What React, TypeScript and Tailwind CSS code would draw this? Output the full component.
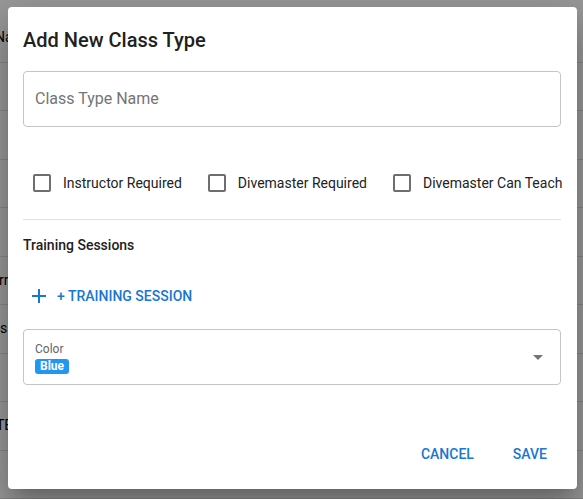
import React from "react";

// ─── Icons ─────────────────────────────────────────────────────────────────────

function PlusIcon() {
  return (
    <svg viewBox="0 0 14 14" className="w-[14px] h-[14px]" fill="none" stroke="currentColor" strokeWidth={2}>
      <line x1="7" y1="0" x2="7" y2="14" />
      <line x1="0" y1="7" x2="14" y2="7" />
    </svg>
  );
}

function ArrowDropDownIcon() {
  return (
    <svg viewBox="0 0 10 5" className="w-[10px] h-[5px]" fill="#757575">
      <polygon points="0,0 10,0 5,5" />
    </svg>
  );
}

function Checkbox({ label }: { label: string }) {
  return (
    <label className="flex items-center gap-[12px] whitespace-nowrap">
      <span className="w-[18px] h-[18px] shrink-0 rounded-[2px] border-2 border-[#6e6e6e] bg-white" />
      <span className="text-[14px] text-[#222]">{label}</span>
    </label>
  );
}

// background table rows that peek out at the dialog edges
const bgRows: { t: string; cls: string }[] = [
  { t: "Name", cls: "-ml-[5px]" },
  { t: "", cls: "" },
  { t: "", cls: "" },
  { t: "", cls: "" },
  { t: "", cls: "" },
  { t: "rrent", cls: "-ml-[1px]" },
  { t: "ssion", cls: "ml-[0px]" },
  { t: "", cls: "" },
  { t: "TEST", cls: "-ml-[4px]" },
  { t: "", cls: "" },
];

export default function App() {
  return (
    <div className="relative w-[583px] h-[499px] overflow-hidden bg-white font-['Roboto',sans-serif]">
      {/* ── Page behind the dialog ── */}
      <div className="pt-[14px]">
        {bgRows.map((r, i) => (
          <div key={i} className="h-[48.5px] border-b border-[#e0e0e0] flex items-center text-[14px] text-black">
            <span className={r.cls}>{r.t}</span>
          </div>
        ))}
      </div>

      {/* ── Backdrop ── */}
      <div className="absolute inset-0 bg-black/40" />

      {/* ── Dialog ── */}
      <div className="absolute left-[8px] top-[7px] w-[569px] h-[482px] bg-white rounded-[4px] shadow-[0_11px_15px_-7px_rgba(0,0,0,0.2),0_24px_38px_3px_rgba(0,0,0,0.14),0_9px_46px_8px_rgba(0,0,0,0.12)] pl-[15px] pr-[16px] pt-[17px] flex flex-col">
        <h2 className="h-[32px] leading-[32px] text-[20px] font-medium text-[#212121]">Add New Class Type</h2>

        {/* Name field */}
        <div className="mt-[15px] h-[56px] rounded-[4px] border border-[#c4c4c4] flex items-center px-[11px]">
          <span className="text-[16px] text-[#757575]">Class Type Name</span>
        </div>

        {/* Checkboxes */}
        <div className="mt-[35px] h-[42px] flex items-center gap-[26px] pl-[10px]">
          <Checkbox label="Instructor Required" />
          <Checkbox label="Divemaster Required" />
          <Checkbox label="Divemaster Can Teach" />
        </div>

        <div className="mt-[15px] border-t border-[#e0e0e0]" />

        <p className="mt-[15px] h-[20px] leading-[20px] text-[14px] font-medium text-[#212121]">Training Sessions</p>

        <button className="mt-[23px] h-[36px] self-start flex items-center gap-[11px] pl-[9px] pr-2 text-[#1976d2] text-[14px] font-medium uppercase">
          <PlusIcon />
          + Training Session
        </button>

        {/* Color select */}
        <div className="mt-[15px] h-[56px] rounded-[4px] border border-[#c4c4c4] flex items-center justify-between pl-[11px] pr-[17px]">
          <div className="flex flex-col">
            <span className="text-[12px] leading-[16px] text-[#666]">Color</span>
            <span className="mt-[2px] self-start rounded-[3px] bg-[#2196f3] px-[5px] h-[15px] leading-[15px] text-[12px] font-bold text-white">Blue</span>
          </div>
          <ArrowDropDownIcon />
        </div>

        {/* Actions */}
        <div className="mt-auto mb-[17px] flex justify-end gap-[39px] pr-[14px]">
          <button className="h-[36px] text-[#1976d2] text-[14px] font-medium uppercase">Cancel</button>
          <button className="h-[36px] text-[#1976d2] text-[14px] font-medium uppercase">Save</button>
        </div>
      </div>
    </div>
  );
}
